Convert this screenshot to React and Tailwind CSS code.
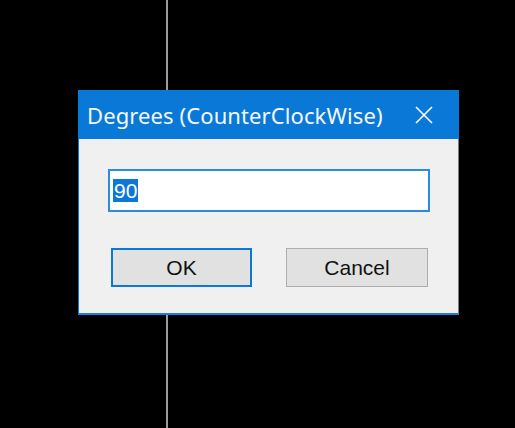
import React from "react";

function CloseIcon() {
  return (
    <svg width="18" height="18" viewBox="0 0 18 18" fill="none">
      <path d="M1 1 L17 17 M17 1 L1 17" stroke="#ffffff" strokeWidth="1.6" />
    </svg>
  );
}

export default function App() {
  return (
    <div className="relative w-[515px] h-[428px] bg-black overflow-hidden">
      {/* canvas guide line */}
      <div className="absolute left-[166px] top-0 w-[2px] h-full bg-[#9c9c9c]" />

      {/* dialog window */}
      <div className="absolute left-[78px] top-[90px] w-[381px] flex flex-col">
        <div className="h-[49px] bg-[#0a78d7] flex items-center justify-between pl-[9px] pr-[26px]">
          <span className="text-[#f4f8fc] text-[22px] font-['Noto_Sans',sans-serif] leading-none tracking-[0.1px]">
            Degrees (CounterClockWise)
          </span>
          <CloseIcon />
        </div>
        <div className="bg-[#f0f0f0] border-l border-[#0a78d7] border-r border-r-[#7d7d7d] border-b-2 border-b-[#1a7fd8] pl-[29px] pt-[30px] pb-[26px] flex flex-col font-['Liberation_Sans',Arial,sans-serif]">
          <div className="w-[322px] h-[43px] bg-white border-2 border-[#2d8ae0] flex items-center pl-[3px]">
            <span className="bg-[#0a78d7] text-white text-[21px] leading-[23px] px-[1px]">90</span>
          </div>
          <div className="flex mt-[36px] gap-[34px] pl-[3px]">
            <button className="w-[141px] h-[39px] bg-[#e1e1e1] border-2 border-[#0a78d7] text-[21px] text-[#111] flex items-center justify-center">
              OK
            </button>
            <button className="w-[142px] h-[39px] bg-[#e1e1e1] border border-[#adadad] text-[21px] text-[#111] flex items-center justify-center">
              Cancel
            </button>
          </div>
        </div>
      </div>
    </div>
  );
}
